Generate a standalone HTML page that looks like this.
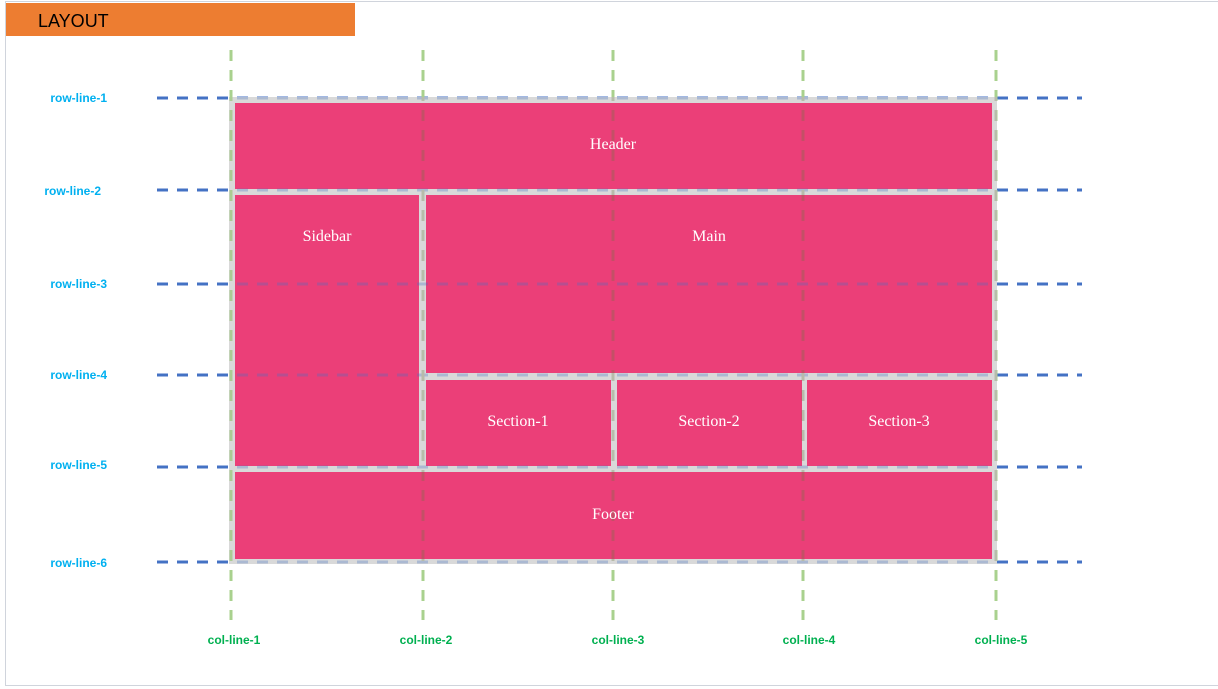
<!DOCTYPE html>
<html><head><meta charset="utf-8"><style>
html,body{margin:0;padding:0;background:#fff;width:1218px;height:689px;overflow:hidden}
svg{display:block}
.rl{font-family:"Liberation Sans",sans-serif;font-weight:bold;font-size:12px;fill:#00b0f0}
.cl{font-family:"Liberation Sans",sans-serif;font-weight:bold;font-size:12px;fill:#00b050}
.bx{font-family:"Liberation Serif",serif;font-size:16px;fill:#fff}
</style></head><body>
<svg width="1218" height="689" xmlns="http://www.w3.org/2000/svg">
<defs><clipPath id="c"><rect x="229" y="97" width="768" height="467"/></clipPath></defs>
<line x1="5" y1="1.5" x2="1218" y2="1.5" stroke="#d0d4dc" stroke-width="1"/>
<line x1="5.5" y1="1" x2="5.5" y2="686" stroke="#d0d4dc" stroke-width="1"/>
<line x1="5" y1="685.5" x2="1218" y2="685.5" stroke="#d0d4dc" stroke-width="1"/>
<rect x="6" y="3" width="349" height="33" fill="#ed7d31"/>
<text x="38" y="27" font-family="Liberation Sans,sans-serif" font-size="18" fill="#000">LAYOUT</text>
<g id="rows" stroke="#4472c4" stroke-width="3" stroke-dasharray="11 9">
<line x1="157" y1="98" x2="1082" y2="98"/>
<line x1="157" y1="190" x2="1082" y2="190"/>
<line x1="157" y1="284" x2="1082" y2="284"/>
<line x1="157" y1="375" x2="1082" y2="375"/>
<line x1="157" y1="467" x2="1082" y2="467"/>
<line x1="157" y1="562" x2="1082" y2="562"/>
</g>
<g id="cols" stroke="#a9d18e" stroke-width="3" stroke-dasharray="11 9">
<line x1="231" y1="50" x2="231" y2="620"/>
<line x1="423" y1="50" x2="423" y2="620"/>
<line x1="613" y1="50" x2="613" y2="620"/>
<line x1="803" y1="50" x2="803" y2="620"/>
<line x1="996" y1="50" x2="996" y2="620"/>
</g>
<rect x="229" y="97" width="768" height="467" fill="#d9d9d9"/>
<g fill="#eb3f78">
<rect x="235" y="103" width="757" height="86"/>
<rect x="235" y="195" width="184" height="271"/>
<rect x="426" y="195" width="566" height="178"/>
<rect x="426" y="380" width="185" height="86"/>
<rect x="617" y="380" width="185" height="86"/>
<rect x="807" y="380" width="185" height="86"/>
<rect x="235" y="472" width="757" height="87"/>
</g>
<g clip-path="url(#c)" opacity="0.3">
<g stroke="#4472c4" stroke-width="3" stroke-dasharray="11 9">
<line x1="157" y1="98" x2="1082" y2="98"/>
<line x1="157" y1="190" x2="1082" y2="190"/>
<line x1="157" y1="284" x2="1082" y2="284"/>
<line x1="157" y1="375" x2="1082" y2="375"/>
<line x1="157" y1="467" x2="1082" y2="467"/>
<line x1="157" y1="562" x2="1082" y2="562"/>
</g>
<g stroke="#6a7a40" stroke-width="3" stroke-dasharray="11 9">
<line x1="231" y1="50" x2="231" y2="620"/>
<line x1="423" y1="50" x2="423" y2="620"/>
<line x1="613" y1="50" x2="613" y2="620"/>
<line x1="803" y1="50" x2="803" y2="620"/>
<line x1="996" y1="50" x2="996" y2="620"/>
</g>
</g>
<line x1="231" y1="97" x2="231" y2="564" stroke="#a9d18e" stroke-width="3" stroke-dasharray="11 9" stroke-dashoffset="47" opacity="0.8"/>
<g class="bx" text-anchor="middle">
<text x="613" y="149">Header</text>
<text x="327" y="241">Sidebar</text>
<text x="709" y="241">Main</text>
<text x="518" y="426">Section-1</text>
<text x="709" y="426">Section-2</text>
<text x="899" y="426">Section-3</text>
<text x="613" y="519">Footer</text>
</g>
<g class="rl" text-anchor="end">
<text x="107" y="102">row-line-1</text>
<text x="101" y="195">row-line-2</text>
<text x="107" y="288">row-line-3</text>
<text x="107" y="379">row-line-4</text>
<text x="107" y="469">row-line-5</text>
<text x="107" y="567">row-line-6</text>
</g>
<g class="cl" text-anchor="middle">
<text x="234" y="644">col-line-1</text>
<text x="426" y="644">col-line-2</text>
<text x="618" y="644">col-line-3</text>
<text x="809" y="644">col-line-4</text>
<text x="1001" y="644">col-line-5</text>
</g>
</svg>
</body></html>
